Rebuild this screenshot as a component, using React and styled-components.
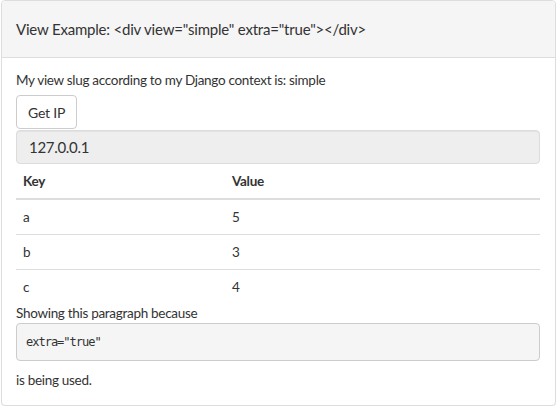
import React from 'react'
import styled, { createGlobalStyle } from 'styled-components';

const GlobalStyle = createGlobalStyle`
body {
  margin: 0;
  background: #ffffff;
  font-family: Lato, "Open Sans", "Liberation Sans", sans-serif;
  font-size: 13.5px;
  letter-spacing: -0.3px;
  line-height: 18px;
  color: #333333;
}
`;

const Panel = styled.div`
box-sizing: border-box;
width: 555px;
margin-left: 1px;
border: 1px solid #dddddd;
border-radius: 4px;
background-color: #ffffff;
box-shadow: 0 1px 1px rgba(0, 0, 0, 0.05);
`;

const Heading = styled.div`
height: 56px;
display: flex;
align-items: center;
padding: 0 15px 0 14px;
background-color: #f5f5f5;
border-bottom: 1px solid #dddddd;
border-radius: 3px 3px 0 0;
font-size: 15px;
letter-spacing: -0.2px;
color: #333333;
`;

const Body = styled.div`
padding: 13px 15px 16px 14px;
`;

const Text = styled.p`
margin: 0 0 ${(p) => p.gap || 0}px;
`;

const Button = styled.button`
display: block;
height: 34px;
padding: 0 11px;
margin-bottom: 1px;
font-family: inherit;
font-size: 14px;
letter-spacing: -0.2px;
color: #333333;
background-color: #ffffff;
border: 1px solid #cccccc;
border-radius: 4px;
cursor: pointer;
`;

const Well = styled.div`
box-sizing: border-box;
height: 34px;
display: flex;
align-items: center;
padding: 0 12px;
background-color: #eeeeee;
border: 1px solid #dcdcdc;
border-radius: 4px;
box-shadow: inset 0 1px 1px rgba(0, 0, 0, 0.05);
font-size: 15px;
`;

const Table = styled.table`
width: 100%;
border-collapse: collapse;
border-spacing: 0;
`;

const Th = styled.th`
text-align: left;
font-weight: 700;
padding: 8px 7px;
border-bottom: 2px solid #dddddd;
width: ${(p) => p.width || 'auto'};
`;

const Td = styled.td`
padding: 8px 7px;
border-top: 1px solid #dddddd;
`;

const Row = styled.tr`
&:first-child td {
  border-top: none;
}
`;

const Pre = styled.pre`
box-sizing: border-box;
height: 38px;
margin: 0 0 10px;
padding: 0 9px;
display: flex;
align-items: center;
font-family: "DejaVu Sans Mono", "Liberation Mono", monospace;
font-size: 12px;
letter-spacing: -1px;
color: #333333;
background-color: #f5f5f5;
border: 1px solid #cccccc;
border-radius: 4px;
`;

const rows = [
  { key: 'a', value: 5 },
  { key: 'b', value: 3 },
  { key: 'c', value: 4 },
];

const App = () => {
  return (
    <>
      <GlobalStyle />
      <Panel>
        <Heading>View Example: &lt;div view="simple" extra="true"&gt;&lt;/div&gt;</Heading>
        <Body>
          <Text gap={6}>My view slug according to my Django context is: simple</Text>
          <Button>Get IP</Button>
          <Well>127.0.0.1</Well>
          <Table>
            <thead>
              <tr>
                <Th width="195px">Key</Th>
                <Th>Value</Th>
              </tr>
            </thead>
            <tbody>
              {rows.map((r) => (
                <Row key={r.key}>
                  <Td>{r.key}</Td>
                  <Td>{r.value}</Td>
                </Row>
              ))}
            </tbody>
          </Table>
          <Text gap={1}>Showing this paragraph because</Text>
          <Pre>extra="true"</Pre>
          <Text>is being used.</Text>
        </Body>
      </Panel>
    </>
  )
}

export default App
